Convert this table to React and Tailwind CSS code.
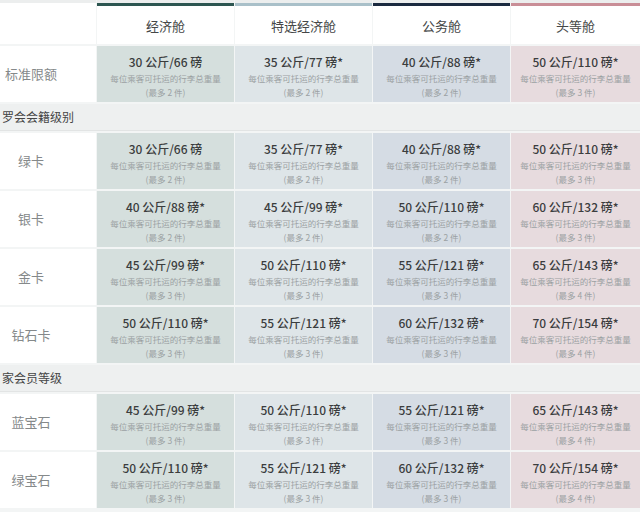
import React from 'react';

const cols = [
  { name: '经济舱', bar: 'bg-[#2d5651]', cell: 'bg-[#d5dfdd]' },
  { name: '特选经济舱', bar: 'bg-[#a9c0c9]', cell: 'bg-[#dee5e8]' },
  { name: '公务舱', bar: 'bg-[#1b2a40]', cell: 'bg-[#d5dce4]' },
  { name: '头等舱', bar: 'bg-[#c98e97]', cell: 'bg-[#e7dbde]' },
];

const rows = [
  { type: 'row', label: '标准限额', cells: [['30 公斤/66 磅', 2], ['35 公斤/77 磅*', 2], ['40 公斤/88 磅*', 2], ['50 公斤/110 磅*', 3]] },
  { type: 'section', label: '罗会会籍级别' },
  { type: 'row', label: '绿卡', cells: [['30 公斤/66 磅', 2], ['35 公斤/77 磅*', 2], ['40 公斤/88 磅*', 2], ['50 公斤/110 磅*', 3]] },
  { type: 'row', label: '银卡', cells: [['40 公斤/88 磅*', 2], ['45 公斤/99 磅*', 2], ['50 公斤/110 磅*', 2], ['60 公斤/132 磅*', 3]] },
  { type: 'row', label: '金卡', cells: [['45 公斤/99 磅*', 3], ['50 公斤/110 磅*', 3], ['55 公斤/121 磅*', 3], ['65 公斤/143 磅*', 4]] },
  { type: 'row', label: '钻石卡', cells: [['50 公斤/110 磅*', 3], ['55 公斤/121 磅*', 3], ['60 公斤/132 磅*', 3], ['70 公斤/154 磅*', 4]] },
  { type: 'section', label: '家会员等级' },
  { type: 'row', label: '蓝宝石', cells: [['45 公斤/99 磅*', 3], ['50 公斤/110 磅*', 3], ['55 公斤/121 磅*', 3], ['65 公斤/143 磅*', 4]] },
  { type: 'row', label: '绿宝石', cells: [['50 公斤/110 磅*', 3], ['55 公斤/121 磅*', 3], ['60 公斤/132 磅*', 3], ['70 公斤/154 磅*', 4]] },
];

const Cell = ({ main, count, bg }) => (
  <div className={`${bg} h-[56px] flex flex-col items-center pt-[7px]`}>
    <p className="text-[12px] leading-[18px] font-medium text-[#3b3d3e]">{main}</p>
    <p className="text-[8.5px] leading-[14px] text-[#9ba1a3]">每位乘客可托运的行李总重量</p>
    <p className="text-[8.5px] leading-[14px] text-[#9ba1a3]">(最多 {count} 件)</p>
  </div>
);

export default function App() {
  return (
    <div className="w-[640px] h-[512px] overflow-hidden bg-[#f3f5f5] font-['Noto_Sans_CJK_SC',sans-serif]">
      <div className="w-[640px] grid grid-cols-[96px_137px_137px_137px_129px] gap-x-[1px] gap-y-[2px]">
        {/* header */}
        <div className="h-[44px] flex flex-col">
          <div className="h-[3px] bg-[#eceeee]"></div>
          <div className="flex-1 bg-white"></div>
        </div>
        {cols.map((c) => (
          <div key={c.name} className="h-[44px] flex flex-col">
            <div className="h-[3px] bg-[#eceeee]"></div>
            <div className={`h-[3px] ${c.bar}`}></div>
            <div className="flex-1 bg-white flex items-center justify-center pt-[2px] text-[13px] text-[#454748]">
              {c.name}
            </div>
          </div>
        ))}

        {rows.map((r, i) =>
          r.type === 'section' ? (
            <div
              key={i}
              className="col-span-5 h-[27px] bg-[#eef0f0] border-b border-[#e2e4e4] flex items-center pl-[2px] text-[12px] text-[#454545]"
            >
              {r.label}
            </div>
          ) : (
            <React.Fragment key={i}>
              <div className="h-[56px] bg-white flex items-center">
                <span className="w-[62px] text-center text-[13px] text-[#85898a]">{r.label}</span>
              </div>
              {r.cells.map((c, j) => (
                <Cell key={j} main={c[0]} count={c[1]} bg={cols[j].cell} />
              ))}
            </React.Fragment>
          )
        )}
      </div>
    </div>
  );
}
